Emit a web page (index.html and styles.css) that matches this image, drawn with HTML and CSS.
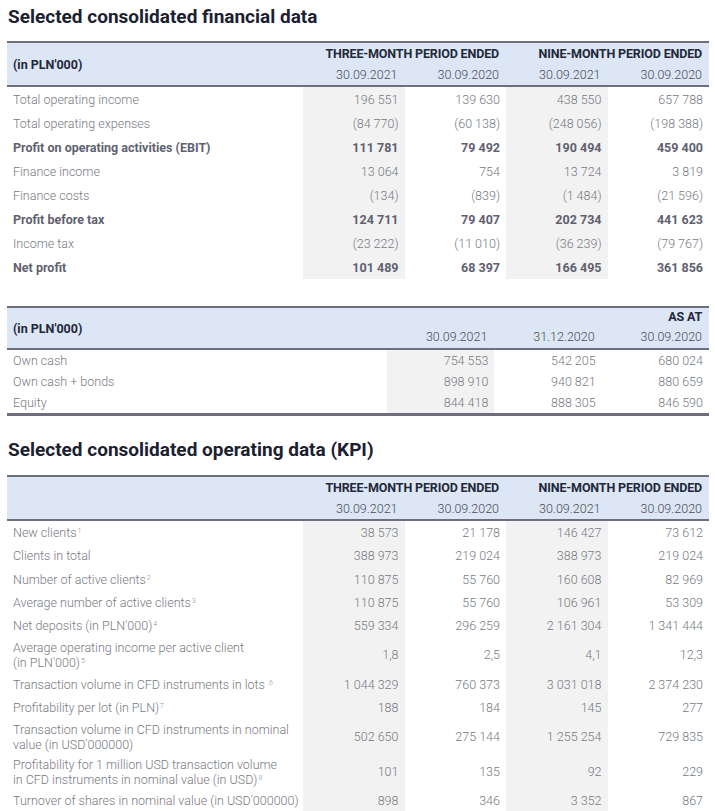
FILE: index.html
```html
<!DOCTYPE html>
<html lang="en">
<head>
<meta charset="utf-8">
<title>Selected consolidated data</title>
<link rel="stylesheet" href="styles.css">
</head>
<body>
<h2 class="title title-first">Selected consolidated financial data</h2>
<table class="tbl fin">
  <colgroup>
    <col class="c-label">
    <col class="c-num shade">
    <col class="c-num">
    <col class="c-num shade">
    <col class="c-num">
  </colgroup>
  <thead>
    <tr class="h1">
      <th class="unit" rowspan="2">(in PLN'000)</th>
      <th class="period" colspan="2">THREE-MONTH PERIOD ENDED</th>
      <th class="period" colspan="2">NINE-MONTH PERIOD ENDED</th>
    </tr>
    <tr class="h2">
      <th class="date">30.09.2021</th>
      <th class="date">30.09.2020</th>
      <th class="date">30.09.2021</th>
      <th class="date">30.09.2020</th>
    </tr>
  </thead>
  <tbody>
    <tr><td>Total operating income</td><td>196 551</td><td>139 630</td><td>438 550</td><td>657 788</td></tr>
    <tr><td>Total operating expenses</td><td>(84 770)</td><td>(60 138)</td><td>(248 056)</td><td>(198 388)</td></tr>
    <tr class="strong"><td>Profit on operating activities (EBIT)</td><td>111 781</td><td>79 492</td><td>190 494</td><td>459 400</td></tr>
    <tr><td>Finance income</td><td>13 064</td><td>754</td><td>13 724</td><td>3 819</td></tr>
    <tr><td>Finance costs</td><td>(134)</td><td>(839)</td><td>(1 484)</td><td>(21 596)</td></tr>
    <tr class="strong"><td>Profit before tax</td><td>124 711</td><td>79 407</td><td>202 734</td><td>441 623</td></tr>
    <tr><td>Income tax</td><td>(23 222)</td><td>(11 010)</td><td>(36 239)</td><td>(79 767)</td></tr>
    <tr class="strong"><td>Net profit</td><td>101 489</td><td>68 397</td><td>166 495</td><td>361 856</td></tr>
  </tbody>
</table>

<table class="tbl cash">
  <colgroup>
    <col class="c-label2">
    <col class="c-num2 shade">
    <col class="c-num2">
    <col class="c-num2">
  </colgroup>
  <thead>
    <tr class="h1">
      <th class="unit" rowspan="2">(in PLN'000)</th>
      <th class="period"></th>
      <th class="period"></th>
      <th class="period">AS AT</th>
    </tr>
    <tr class="h2">
      <th class="date">30.09.2021</th>
      <th class="date">31.12.2020</th>
      <th class="date">30.09.2020</th>
    </tr>
  </thead>
  <tbody>
    <tr><td>Own cash</td><td>754 553</td><td>542 205</td><td>680 024</td></tr>
    <tr><td>Own cash + bonds</td><td>898 910</td><td>940 821</td><td>880 659</td></tr>
    <tr><td>Equity</td><td>844 418</td><td>888 305</td><td>846 590</td></tr>
  </tbody>
</table>

<h2 class="title title-second">Selected consolidated operating data (KPI)</h2>
<table class="tbl kpi">
  <colgroup>
    <col class="c-label">
    <col class="c-num shade">
    <col class="c-num">
    <col class="c-num shade">
    <col class="c-num">
  </colgroup>
  <thead>
    <tr class="h1">
      <th class="unit" rowspan="2"></th>
      <th class="period" colspan="2">THREE-MONTH PERIOD ENDED</th>
      <th class="period" colspan="2">NINE-MONTH PERIOD ENDED</th>
    </tr>
    <tr class="h2">
      <th class="date">30.09.2021</th>
      <th class="date">30.09.2020</th>
      <th class="date">30.09.2021</th>
      <th class="date">30.09.2020</th>
    </tr>
  </thead>
  <tbody>
    <tr><td>New clients<sup>1</sup></td><td>38 573</td><td>21 178</td><td>146 427</td><td>73 612</td></tr>
    <tr><td>Clients in total</td><td>388 973</td><td>219 024</td><td>388 973</td><td>219 024</td></tr>
    <tr><td>Number of active clients<sup>2</sup></td><td>110 875</td><td>55 760</td><td>160 608</td><td>82 969</td></tr>
    <tr><td>Average number of active clients<sup>3</sup></td><td>110 875</td><td>55 760</td><td>106 961</td><td>53 309</td></tr>
    <tr><td>Net deposits (in PLN'000)<sup>4</sup></td><td>559 334</td><td>296 259</td><td>2 161 304</td><td>1 341 444</td></tr>
    <tr class="two"><td>Average operating income per active client<br>(in PLN'000)<sup>5</sup></td><td>1,8</td><td>2,5</td><td>4,1</td><td>12,3</td></tr>
    <tr><td>Transaction volume in CFD instruments in lots <sup>6</sup></td><td>1 044 329</td><td>760 373</td><td>3 031 018</td><td>2 374 230</td></tr>
    <tr><td>Profitability per lot (in PLN)<sup>7</sup></td><td>188</td><td>184</td><td>145</td><td>277</td></tr>
    <tr class="two"><td>Transaction volume in CFD instruments in nominal<br>value (in USD'000000)</td><td>502 650</td><td>275 144</td><td>1 255 254</td><td>729 835</td></tr>
    <tr class="two"><td>Profitability for 1 million USD transaction volume<br>in CFD instruments in nominal value (in USD)<sup>8</sup></td><td>101</td><td>135</td><td>92</td><td>229</td></tr>
    <tr><td>Turnover of shares in nominal value (in USD'000000)</td><td>898</td><td>346</td><td>3 352</td><td>867</td></tr>
  </tbody>
</table>
</body>
</html>
```

FILE: styles.css
```css
html, body {
  margin: 0;
  padding: 0;
  background: #ffffff;
}

body {
  padding: 0 6px 0 7px;
  font-family: Roboto, "Liberation Sans", Arial, sans-serif;
  color: #777a82;
}

.title {
  font-family: Roboto, "Liberation Sans", Arial, sans-serif;
  font-weight: 700;
  font-size: 19px;
  line-height: 24px;
  color: #1b2130;
  margin: 0;
  padding-left: 1px;
}

.title-first {
  margin: 5px 0 12px;
}

.title-second {
  margin: 22px 0 13px;
}

.tbl {
  width: 702px;
  table-layout: fixed;
  border-collapse: separate;
  border-spacing: 0;
  border-top: 2px solid #6d6f7c;
}

.c-label { width: 296px; }
.c-num { width: 101.5px; }
.c-label2 { width: 380px; }
.c-num2 { width: 107.3px; }

.shade { background: #f2f2f2; }

.tbl th {
  background: #dce6f4;
  padding: 0 7px 0 6px;
  text-align: right;
  white-space: nowrap;
}

.tbl th.unit {
  text-align: left;
  font-size: 12.5px;
  font-weight: 700;
  color: #23283a;
  border-bottom: 2px solid #6d6f7c;
}

.tbl th.period {
  font-size: 12.5px;
  font-weight: 700;
  color: #23283a;
  letter-spacing: -0.15px;
}

.tbl th.date {
  font-size: 12.5px;
  font-weight: 300;
  color: #4a4d57;
  border-bottom: 2px solid #6d6f7c;
}

.tbl .h1 { height: 20px; }
.tbl .h2 { height: 24px; }

.tbl td {
  font-size: 12.5px;
  font-weight: 300;
  line-height: 15px;
  color: #777a82;
  padding: 3px 6px 3px 6px;
  text-align: right;
  white-space: nowrap;
}

.tbl td:first-child {
  text-align: left;
}

.tbl tr.strong td {
  font-weight: 700;
  color: #5f6170;
}

.fin tbody tr { height: 24px; }

.cash {
  margin-top: 27px;
  border-bottom: 3px solid #6d6f7c;
}

.cash .h1 { height: 17px; }
.cash .h2 { height: 25px; }
.cash tbody tr { height: 21px; }
.cash td { padding-top: 0; padding-bottom: 0; }

.kpi tbody tr { height: 23.3px; }
.kpi tbody tr.two td { padding-top: 2.5px; padding-bottom: 2.5px; }

.tbl sup {
  font-size: 7px;
  line-height: 0;
  vertical-align: 4px;
  margin-left: 1px;
  color: #8a8d94;
}
```
